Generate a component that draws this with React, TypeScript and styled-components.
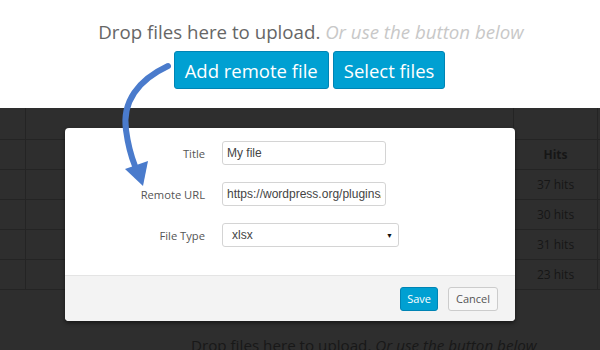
import { FC } from "react";
import styled, { createGlobalStyle } from "styled-components";

const GlobalStyle = createGlobalStyle`
  * { box-sizing: border-box; }
  html, body { margin: 0; padding: 0; }
  body {
    width: 600px;
    height: 350px;
    overflow: hidden;
    background: #fff;
    font-family: "Open Sans", "Liberation Sans", sans-serif;
  }
`;

const rows = ["37 hits", "30 hits", "31 hits", "23 hits"];

const App: FC = () => {
  return (
    <>
      <GlobalStyle />
      <Page>
        <DropZone>
          <DropText>
            Drop files here to upload. <DropHint>Or use the button below</DropHint>
          </DropText>
          <ButtonRow>
            <UploadButton>Add remote file</UploadButton>
            <UploadButton>Select files</UploadButton>
          </ButtonRow>
        </DropZone>

        <Backdrop>
          <Table>
            <TableRow $head>
              <Cell $narrow />
              <Cell />
              <HitsCell />
            </TableRow>
            <TableRow>
              <Cell $narrow />
              <Cell />
              <HitsCell $bold>Hits</HitsCell>
            </TableRow>
            {rows.map((hits) => (
              <TableRow key={hits}>
                <Cell $narrow />
                <Cell />
                <HitsCell>{hits}</HitsCell>
              </TableRow>
            ))}
          </Table>
          <DimDropText>
            Drop files here to upload. <em>Or use the button below</em>
          </DimDropText>

          <Modal>
            <ModalBody>
              <FieldRow>
                <FieldLabel>Title</FieldLabel>
                <TextInput defaultValue="My file" />
              </FieldRow>
              <FieldRow>
                <FieldLabel>Remote URL</FieldLabel>
                <TextInput defaultValue="https://wordpress.org/plugins/wp-file-download" />
              </FieldRow>
              <FieldRow>
                <FieldLabel>File Type</FieldLabel>
                <SelectBox>
                  <span>xlsx</span>
                  <Caret>▼</Caret>
                </SelectBox>
              </FieldRow>
            </ModalBody>
            <ModalFooter>
              <FooterButton $primary>Save</FooterButton>
              <FooterButton>Cancel</FooterButton>
            </ModalFooter>
          </Modal>
        </Backdrop>

        <Arrow width="600" height="350" viewBox="0 0 600 350">
          <path
            d="M168 66 C138 80 122 102 126 130 C128 145 131 156 135 166"
            fill="none"
            stroke="#4a7bcc"
            strokeWidth="6"
            strokeLinecap="round"
          />
          <polygon points="125,169 148,161 143,186" fill="#4a7bcc" />
        </Arrow>
      </Page>
    </>
  );
};

const Page = styled.div`
  position: relative;
  width: 600px;
  height: 350px;
  display: flex;
  flex-direction: column;
`;

const DropZone = styled.div`
  height: 108px;
  display: flex;
  flex-direction: column;
  align-items: center;
  padding-top: 19px;
  gap: 6px;
`;

const DropText = styled.div`
  font-size: 18.7px;
  color: #666;
  line-height: 26px;
  padding-left: 22px;
`;

const DropHint = styled.em`
  color: #c8c8c8;
`;

const ButtonRow = styled.div`
  display: flex;
  gap: 4px;
  padding-left: 19px;
`;

const UploadButton = styled.button`
  height: 38px;
  padding: 0 10px;
  background: #00a0d2;
  border: 1px solid #0084b4;
  border-radius: 3px;
  color: #fff;
  font-family: "Open Sans", "Liberation Sans", sans-serif;
  font-size: 18.5px;
`;

const Backdrop = styled.div`
  position: relative;
  flex: 1;
  background: #2e2e2e;
  overflow: hidden;
`;

const Table = styled.div`
  display: flex;
  flex-direction: column;
`;

const TableRow = styled.div<{ $head?: boolean }>`
  display: flex;
  height: ${({ $head }) => ($head ? "32px" : "30px")};
  border-bottom: 1px solid #242424;
`;

const Cell = styled.div<{ $narrow?: boolean }>`
  width: ${({ $narrow }) => ($narrow ? "26px" : "auto")};
  flex: ${({ $narrow }) => ($narrow ? "none" : "1")};
  border-right: 1px solid #242424;
`;

const HitsCell = styled.div<{ $bold?: boolean }>`
  width: 84px;
  display: flex;
  align-items: center;
  justify-content: center;
  font-size: 12px;
  font-weight: ${({ $bold }) => ($bold ? 700 : 400)};
  color: #161616;
  border-right: 1px solid #242424;
  margin-right: 2px;
`;

const DimDropText = styled.div`
  margin-top: 45px;
  padding-left: 191px;
  font-size: 15.2px;
  color: #181818;
  white-space: nowrap;
`;

const Modal = styled.div`
  position: absolute;
  left: 65px;
  top: 20px;
  width: 450px;
  height: 193px;
  background: #fff;
  border-radius: 4px;
  box-shadow: 0 2px 4px rgba(0, 0, 0, 0.5);
  overflow: hidden;
  display: flex;
  flex-direction: column;
`;

const ModalBody = styled.div`
  flex: 1;
  display: flex;
  flex-direction: column;
  gap: 17px;
  padding-top: 13px;
`;

const FieldRow = styled.div`
  display: flex;
  align-items: center;
  gap: 17px;
`;

const FieldLabel = styled.div`
  width: 140px;
  text-align: right;
  font-size: 11.2px;
  color: #555;
`;

const TextInput = styled.input`
  width: 164px;
  height: 24px;
  padding: 0 4px;
  border: 1px solid #d4d4d4;
  border-radius: 3px;
  font-family: "Liberation Sans", Arial, sans-serif;
  font-size: 12px;
  color: #444;
  outline: none;
`;

const SelectBox = styled.div`
  width: 177px;
  height: 24px;
  padding: 0 5px 0 9px;
  border: 1px solid #d4d4d4;
  border-radius: 3px;
  display: flex;
  align-items: center;
  justify-content: space-between;
  font-family: "Liberation Sans", Arial, sans-serif;
  font-size: 12px;
  color: #444;
`;

const Caret = styled.span`
  font-size: 7px;
  color: #111;
`;

const ModalFooter = styled.div`
  height: 46px;
  background: #f3f3f3;
  border-top: 1px solid #e4e4e4;
  display: flex;
  align-items: center;
  justify-content: flex-end;
  gap: 10px;
  padding-right: 17px;
`;

const FooterButton = styled.button<{ $primary?: boolean }>`
  height: 24px;
  padding: 0 ${({ $primary }) => ($primary ? "6px" : "7px")};
  border-radius: 3px;
  border: 1px solid ${({ $primary }) => ($primary ? "#0084b4" : "#ccc")};
  background: ${({ $primary }) => ($primary ? "#00a0d2" : "#f7f7f7")};
  color: ${({ $primary }) => ($primary ? "#fff" : "#555")};
  font-family: "Open Sans", "Liberation Sans", sans-serif;
  font-size: 11px;
`;

const Arrow = styled.svg`
  position: absolute;
  left: 0;
  top: 0;
  pointer-events: none;
`;

export default App;
